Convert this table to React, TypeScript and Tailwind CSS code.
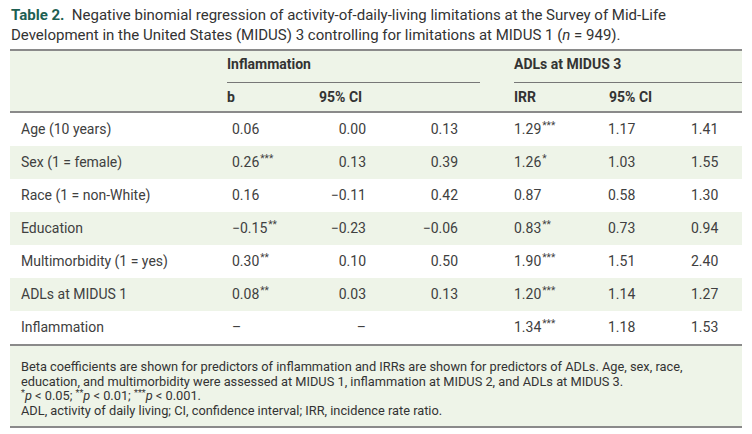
// Table 2 – regression results, rendered as a fixed-width journal table.

type Row = {
  label: string;
  b: string;
  bSig?: string;
  lo: string;
  hi: string;
  irr: string;
  irrSig?: string;
  lo2: string;
  hi2: string;
};

const ROWS: Row[] = [
  { label: "Age (10 years)", b: "0.06", lo: "0.00", hi: "0.13", irr: "1.29", irrSig: "***", lo2: "1.17", hi2: "1.41" },
  { label: "Sex (1 = female)", b: "0.26", bSig: "***", lo: "0.13", hi: "0.39", irr: "1.26", irrSig: "*", lo2: "1.03", hi2: "1.55" },
  { label: "Race (1 = non-White)", b: "0.16", lo: "\u22120.11", hi: "0.42", irr: "0.87", lo2: "0.58", hi2: "1.30" },
  { label: "Education", b: "\u22120.15", bSig: "**", lo: "\u22120.23", hi: "\u22120.06", irr: "0.83", irrSig: "**", lo2: "0.73", hi2: "0.94" },
  { label: "Multimorbidity (1 = yes)", b: "0.30", bSig: "**", lo: "0.10", hi: "0.50", irr: "1.90", irrSig: "***", lo2: "1.51", hi2: "2.40" },
  { label: "ADLs at MIDUS 1", b: "0.08", bSig: "**", lo: "0.03", hi: "0.13", irr: "1.20", irrSig: "***", lo2: "1.14", hi2: "1.27" },
  { label: "Inflammation", b: "\u2013", lo: "\u2013", hi: "", irr: "1.34", irrSig: "***", lo2: "1.18", hi2: "1.53" },
];

function Sig({ s }: { s?: string }) {
  if (!s) return null;
  return <span className="relative -top-[5px] ml-[1px] text-[10px] leading-none">{s}</span>;
}

function DataRow({ row, shaded }: { row: Row; shaded: boolean }) {
  return (
    <div className={`flex h-[33px] items-center ${shaded ? "bg-[#eef4e8]" : ""}`}>
      <div className="w-[217px] pl-[11px]">{row.label}</div>
      <div className="w-[73px] pl-[5px]">
        {row.b}
        <Sig s={row.bSig} />
      </div>
      <div className="w-[66px] text-right">{row.lo}</div>
      <div className="w-[92px] text-right">{row.hi}</div>
      <div className="ml-[56px] w-[94px]">
        {row.irr}
        <Sig s={row.irrSig} />
      </div>
      <div className="w-[83px]">{row.lo2}</div>
      <div className="w-[51px]">{row.hi2}</div>
    </div>
  );
}

function Star({ s }: { s: string }) {
  return <span className="relative -top-[4px] text-[9px] leading-none">{s}</span>;
}

export default function App() {
  return (
    <div className="h-[434px] w-[752px] bg-white font-['Roboto',sans-serif] text-[#404040]">
      <p className="px-[11px] pt-[6px] text-[15px] leading-[19.5px] text-[#333]">
        <span className="font-bold text-[#1d5f52]">Table 2.</span>&nbsp; Negative binomial regression of
        activity-of-daily-living limitations at the Survey of Mid-Life Development in the United States
        (MIDUS) 3 controlling for limitations at MIDUS 1 (<i>n</i>&nbsp;=&nbsp;949).
      </p>

      <div className="mx-[10px] mt-[4px] text-[14px]">
        {/* header */}
        <div className="border-y-2 border-[#8a8a8a] bg-[#eef4e8] font-bold text-[#333]">
          <div className="flex h-[32px] items-end">
            <div className="ml-[217px] w-[253px] border-b border-[#777] pb-[7px]">Inflammation</div>
            <div className="ml-[34px] flex-1 border-b border-[#777] pb-[7px]">ADLs at MIDUS 3</div>
          </div>
          <div className="flex h-[28px] items-center">
            <div className="ml-[217px] w-[92px]">b</div>
            <div className="w-[60px]">95% CI</div>
            <div className="ml-[135px] w-[95px]">IRR</div>
            <div>95% CI</div>
          </div>
        </div>

        {ROWS.map((r, i) => (
          <DataRow key={r.label} row={r} shaded={i % 2 === 1} />
        ))}

        {/* footnotes */}
        <div className="border-y-2 border-[#8a8a8a] bg-[#eef4e8] px-[11px] pt-[14px] pb-[8px] text-[12.8px] leading-[14.5px] text-[#333]">
          <p>
            Beta coefficients are shown for predictors of inflammation and IRRs are shown for predictors of ADLs. Age,
            sex, race, education, and multimorbidity were assessed at MIDUS 1, inflammation at MIDUS 2, and ADLs at
            MIDUS 3.
          </p>
          <p>
            <Star s="*" />
            <i>p</i> &lt; 0.05; <Star s="**" />
            <i>p</i> &lt; 0.01; <Star s="***" />
            <i>p</i> &lt; 0.001.
          </p>
          <p>ADL, activity of daily living; CI, confidence interval; IRR, incidence rate ratio.</p>
        </div>
      </div>
    </div>
  );
}
